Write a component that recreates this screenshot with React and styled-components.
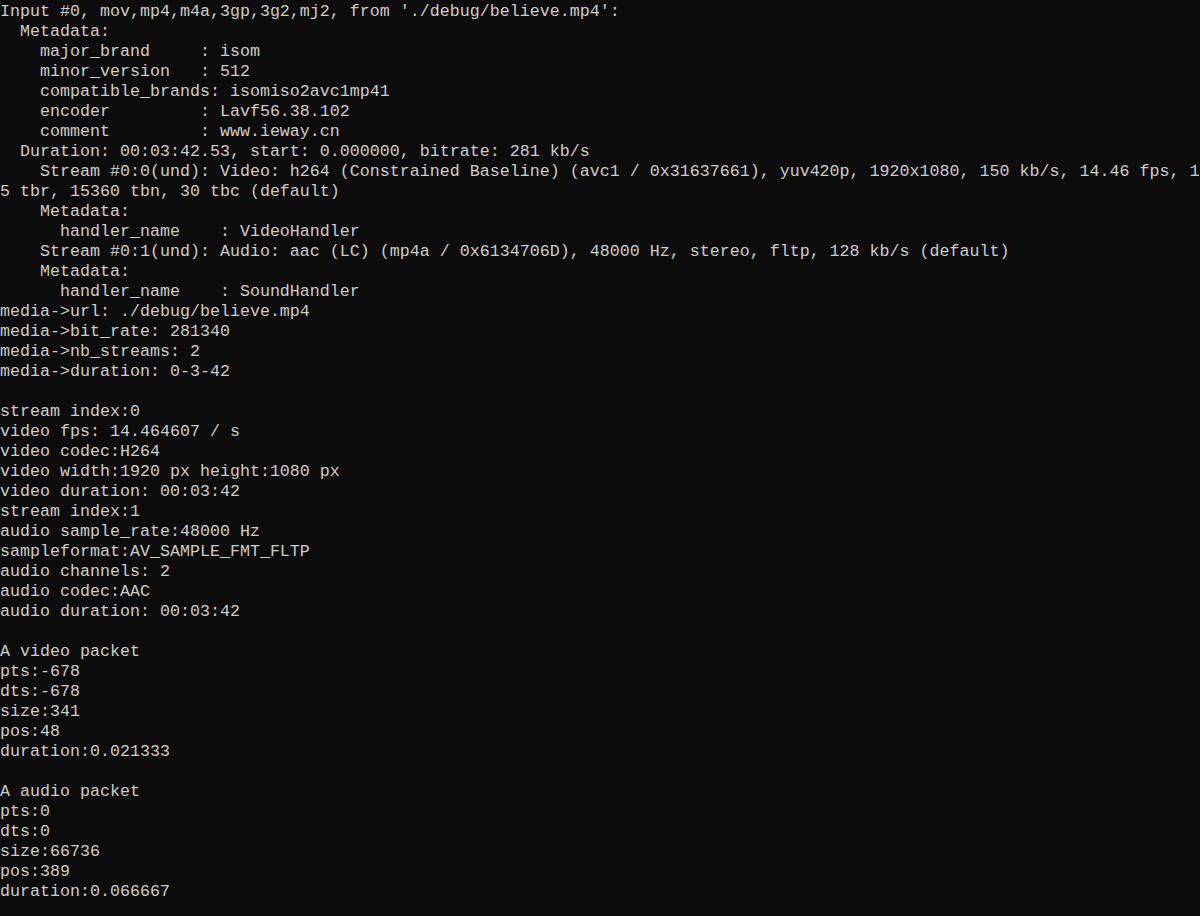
import React from 'react';
import styled, { createGlobalStyle } from 'styled-components';

const GlobalStyle = createGlobalStyle`
  html, body {
    margin: 0;
    padding: 0;
    background: #0c0c0c;
  }
`;

const Console = styled.div`
  box-sizing: border-box;
  width: 1200px;
  height: 916px;
  padding-top: 2px;
  overflow: hidden;
  background: #0c0c0c;
  color: #cccccc;
  font-family: "Liberation Mono", "Courier New", monospace;
  font-size: 16.67px;
  line-height: 20px;
`;

const Line = styled.div`
  white-space: pre;
  height: 20px;
`;

const output = [
  "Input #0, mov,mp4,m4a,3gp,3g2,mj2, from './debug/believe.mp4':",
  "  Metadata:",
  "    major_brand     : isom",
  "    minor_version   : 512",
  "    compatible_brands: isomiso2avc1mp41",
  "    encoder         : Lavf56.38.102",
  "    comment         : www.ieway.cn",
  "  Duration: 00:03:42.53, start: 0.000000, bitrate: 281 kb/s",
  "    Stream #0:0(und): Video: h264 (Constrained Baseline) (avc1 / 0x31637661), yuv420p, 1920x1080, 150 kb/s, 14.46 fps, 1",
  "5 tbr, 15360 tbn, 30 tbc (default)",
  "    Metadata:",
  "      handler_name    : VideoHandler",
  "    Stream #0:1(und): Audio: aac (LC) (mp4a / 0x6134706D), 48000 Hz, stereo, fltp, 128 kb/s (default)",
  "    Metadata:",
  "      handler_name    : SoundHandler",
  "media->url: ./debug/believe.mp4",
  "media->bit_rate: 281340",
  "media->nb_streams: 2",
  "media->duration: 0-3-42",
  "",
  "stream index:0",
  "video fps: 14.464607 / s",
  "video codec:H264",
  "video width:1920 px height:1080 px",
  "video duration: 00:03:42",
  "stream index:1",
  "audio sample_rate:48000 Hz",
  "sampleformat:AV_SAMPLE_FMT_FLTP",
  "audio channels: 2",
  "audio codec:AAC",
  "audio duration: 00:03:42",
  "",
  "A video packet",
  "pts:-678",
  "dts:-678",
  "size:341",
  "pos:48",
  "duration:0.021333",
  "",
  "A audio packet",
  "pts:0",
  "dts:0",
  "size:66736",
  "pos:389",
  "duration:0.066667",
];

export default function App() {
  return (
    <>
      <GlobalStyle />
      <Console>
        {output.map((text, i) => (
          <Line key={i}>{text}</Line>
        ))}
      </Console>
    </>
  );
}
